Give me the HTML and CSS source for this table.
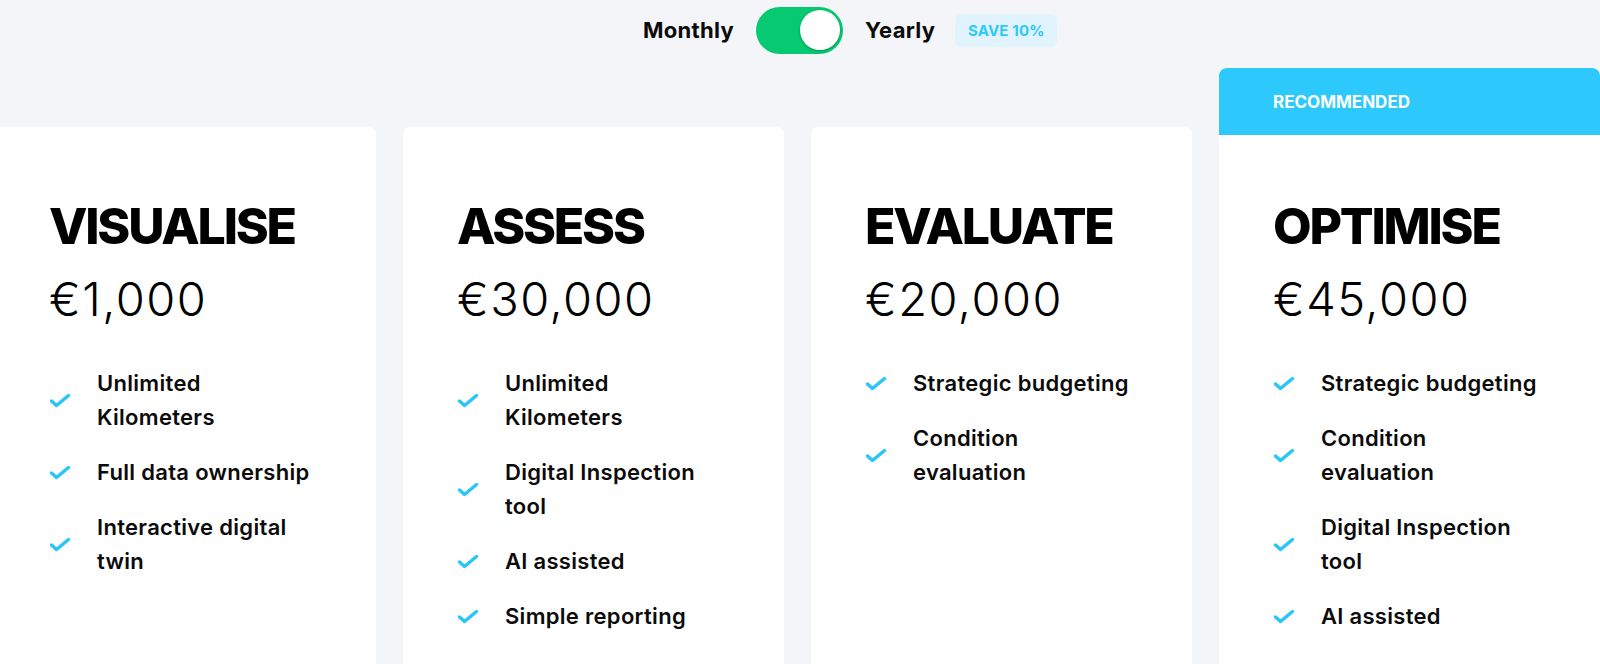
FILE: index.html
```html
<!DOCTYPE html>
<html lang="en">
<head>
<meta charset="utf-8">
<title>Pricing</title>
<link rel="stylesheet" href="styles.css">
</head>
<body>
<div class="billing">
  <span class="billing-label">Monthly</span>
  <button class="switch" type="button" aria-label="Toggle yearly billing"><span class="knob"></span></button>
  <span class="billing-label">Yearly</span>
  <span class="save-badge">SAVE 10%</span>
</div>

<div class="plans">
  <section class="card">
    <div class="card-body">
      <h2 class="plan-name">VISUALISE</h2>
      <div class="plan-price">€1,000</div>
      <ul class="features">
        <li><svg class="check" viewBox="0 0 22 15"><polyline points="2.5,8 7.5,12.5 19.5,2.5"/></svg><span>Unlimited Kilometers</span></li>
        <li><svg class="check" viewBox="0 0 22 15"><polyline points="2.5,8 7.5,12.5 19.5,2.5"/></svg><span>Full data ownership</span></li>
        <li><svg class="check" viewBox="0 0 22 15"><polyline points="2.5,8 7.5,12.5 19.5,2.5"/></svg><span>Interactive digital twin</span></li>
      </ul>
    </div>
  </section>

  <section class="card">
    <div class="card-body">
      <h2 class="plan-name">ASSESS</h2>
      <div class="plan-price">€30,000</div>
      <ul class="features">
        <li><svg class="check" viewBox="0 0 22 15"><polyline points="2.5,8 7.5,12.5 19.5,2.5"/></svg><span>Unlimited Kilometers</span></li>
        <li><svg class="check" viewBox="0 0 22 15"><polyline points="2.5,8 7.5,12.5 19.5,2.5"/></svg><span>Digital Inspection tool</span></li>
        <li><svg class="check" viewBox="0 0 22 15"><polyline points="2.5,8 7.5,12.5 19.5,2.5"/></svg><span>AI assisted</span></li>
        <li><svg class="check" viewBox="0 0 22 15"><polyline points="2.5,8 7.5,12.5 19.5,2.5"/></svg><span>Simple reporting</span></li>
      </ul>
    </div>
  </section>

  <section class="card">
    <div class="card-body">
      <h2 class="plan-name">EVALUATE</h2>
      <div class="plan-price">€20,000</div>
      <ul class="features">
        <li><svg class="check" viewBox="0 0 22 15"><polyline points="2.5,8 7.5,12.5 19.5,2.5"/></svg><span>Strategic budgeting</span></li>
        <li><svg class="check" viewBox="0 0 22 15"><polyline points="2.5,8 7.5,12.5 19.5,2.5"/></svg><span>Condition evaluation</span></li>
      </ul>
    </div>
  </section>

  <section class="card card-recommended">
    <div class="card-ribbon">RECOMMENDED</div>
    <div class="card-body">
      <h2 class="plan-name">OPTIMISE</h2>
      <div class="plan-price">€45,000</div>
      <ul class="features">
        <li><svg class="check" viewBox="0 0 22 15"><polyline points="2.5,8 7.5,12.5 19.5,2.5"/></svg><span>Strategic budgeting</span></li>
        <li><svg class="check" viewBox="0 0 22 15"><polyline points="2.5,8 7.5,12.5 19.5,2.5"/></svg><span>Condition evaluation</span></li>
        <li><svg class="check" viewBox="0 0 22 15"><polyline points="2.5,8 7.5,12.5 19.5,2.5"/></svg><span>Digital Inspection tool</span></li>
        <li><svg class="check" viewBox="0 0 22 15"><polyline points="2.5,8 7.5,12.5 19.5,2.5"/></svg><span>AI assisted</span></li>
      </ul>
    </div>
  </section>
</div>
</body>
</html>
```

FILE: styles.css
```css
* { box-sizing: border-box; }

html, body {
  margin: 0;
  padding: 0;
}

body {
  background: #f4f5f9;
  font-family: Inter, "Open Sans", sans-serif;
  color: #0b0b0b;
  overflow: hidden;
  height: 664px;
}

/* Billing toggle */
.billing {
  display: flex;
  align-items: center;
  height: 60px;
  padding-left: 643px;
}

.billing-label {
  font-size: 22px;
  font-weight: 700;
  letter-spacing: 0.3px;
  color: #0b0b0b;
}

.switch {
  display: flex;
  align-items: center;
  justify-content: flex-end;
  width: 87px;
  height: 47px;
  margin: 0 22px;
  padding: 0 3px;
  border: none;
  border-radius: 24px;
  background: #06c972;
}

.knob {
  width: 40px;
  height: 40px;
  border-radius: 50%;
  background: #ffffff;
  box-shadow: 0 1px 3px rgba(0, 0, 0, 0.25);
}

.save-badge {
  display: flex;
  align-items: center;
  justify-content: center;
  width: 102px;
  height: 33px;
  margin-left: 20px;
  border-radius: 6px;
  background: #e1f3fc;
  color: #2ec9fc;
  font-size: 15px;
  font-weight: 700;
  letter-spacing: 0.2px;
}

/* Plans */
.plans {
  display: flex;
  align-items: flex-start;
  gap: 27px;
  margin-left: -5px;
  padding-top: 8px;
}

.card {
  flex: 0 0 381px;
  width: 381px;
  height: 700px;
  margin-top: 59px;
  background: #ffffff;
  border-radius: 8px;
}

.card-recommended {
  margin-top: 0;
}

.card-ribbon {
  display: flex;
  align-items: center;
  height: 67px;
  padding-left: 54px;
  background: #2ec9fc;
  border-radius: 8px 8px 0 0;
  color: #ffffff;
  font-size: 17px;
  font-weight: 700;
}

.card-body {
  padding: 69px 54px 0;
}

.card-recommended .card-body {
  padding-top: 61px;
}

.plan-name {
  margin: 0;
  font-size: 50px;
  line-height: 60px;
  font-weight: 800;
  letter-spacing: -2.2px;
  color: #000000;
}

.plan-price {
  margin-top: 15px;
  font-size: 47px;
  line-height: 56px;
  font-weight: 300;
  letter-spacing: 1.5px;
  color: #000000;
}

.features {
  list-style: none;
  margin: 39px 0 0;
  padding: 0;
  display: flex;
  flex-direction: column;
  gap: 21px;
}

.features li {
  display: flex;
  align-items: center;
  gap: 26px;
  font-size: 22px;
  line-height: 34px;
  font-weight: 600;
  letter-spacing: 0.3px;
}

.features span {
  max-width: 219px;
}

.check {
  flex: 0 0 22px;
  width: 22px;
  height: 15px;
  fill: none;
  stroke: #2bc6f8;
  stroke-width: 3.5;
  stroke-linecap: round;
  stroke-linejoin: round;
}
```
